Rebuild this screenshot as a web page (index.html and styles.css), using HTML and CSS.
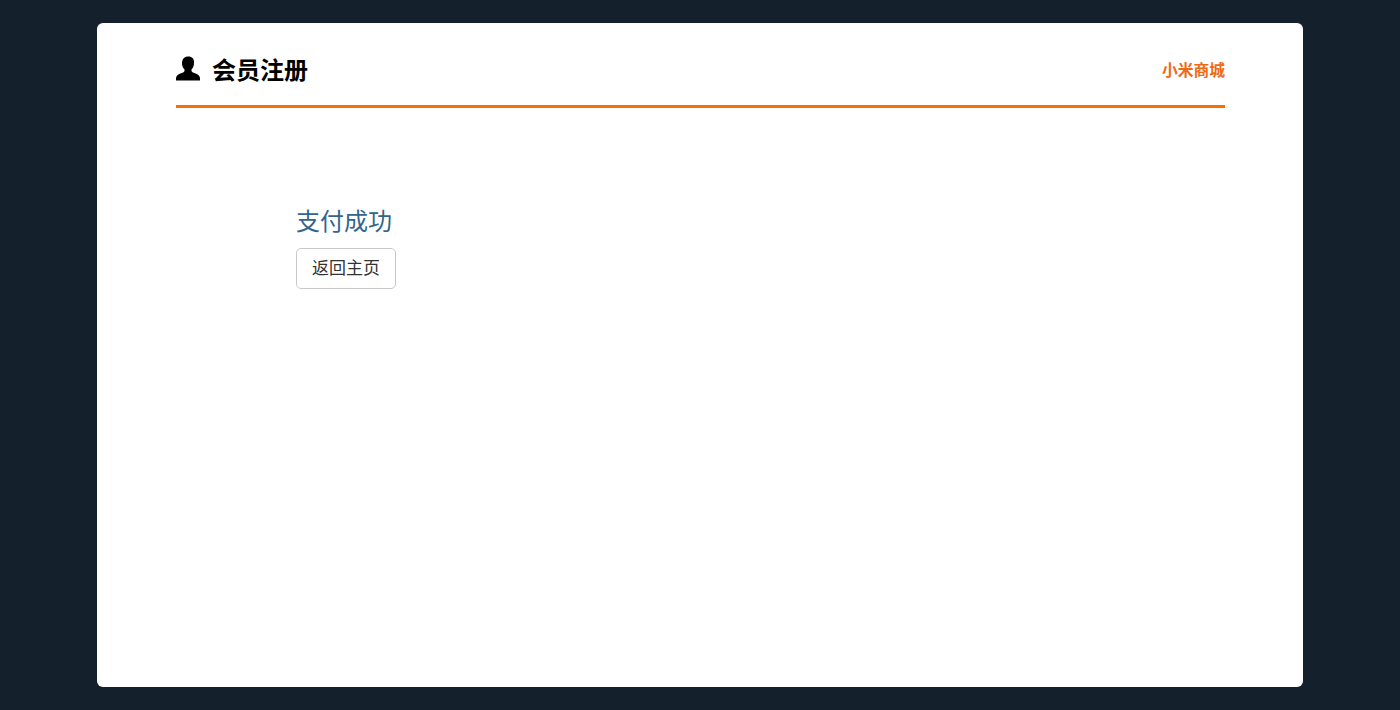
FILE: index.html
```html
<!DOCTYPE html>
<html lang="zh-CN">
<head>
<meta charset="utf-8">
<title>会员注册</title>
<link rel="stylesheet" href="styles.css">
</head>
<body>
<main class="card">
  <header class="head">
    <h1 class="title">
      <svg class="user-icon" viewBox="0 0 24 24" aria-hidden="true"><path d="M12.300 0C8.400 0 6 2.700 6 6.500c0 2.800 1 5 2.500 6.500v1.200c0 1.200-1.500 1.800-3.500 2.600-2.700 1.100-4.500 2.200-5 4.700V24h24v-2.500c-.5-2.500-2.300-3.600-5-4.700-2-.8-3.500-1.400-3.500-2.600V13c1.500-1.500 2.500-3.700 2.500-6.500C18.500 2.700 16.200 0 12.300 0z"/></svg>
      <span>会员注册</span>
    </h1>
    <a class="shop" href="#">小米商城</a>
  </header>
  <section class="body">
    <h2 class="msg">支付成功</h2>
    <a class="btn" href="#">返回主页</a>
  </section>
</main>
</body>
</html>
```
FILE: styles.css
```css
* { box-sizing: border-box; }
html, body { height: 100%; }
body {
  margin: 0;
  background: #14202b;
  font-family: "Liberation Sans", "Noto Sans CJK SC", sans-serif;
  padding: 23px 97px;
}
.card {
  width: 1206px;
  height: 664px;
  background: #fff;
  border-radius: 6px;
  padding: 0 78px 0 79px;
}
.head {
  height: 85px;
  border-bottom: 3px solid #fa6e00;
  display: flex;
  align-items: center;
  justify-content: space-between;
  padding-top: 21px;
  padding-bottom: 8px;
}
.title {
  margin: 0;
  display: flex;
  align-items: center;
  gap: 12px;
  font-size: 24px;
  line-height: 30px;
  font-weight: 700;
  color: #000;
}
.user-icon { width: 24px; height: 25px; display: block; margin-top: -5px; }
.shop {
  font-size: 15.750px;
  font-weight: 700;
  color: #ee6a14;
  text-decoration: none;
  margin-top: -3px;
}
.body { padding: 97px 0 0 120px; }
.msg {
  margin: 0 0 9px;
  font-size: 24px;
  line-height: 34px;
  font-weight: 400;
  color: #31658c;
}
.btn {
  display: inline-block;
  width: 100px;
  height: 41px;
  border: 1px solid #c8c8c8;
  border-radius: 5px;
  font-size: 17px;
  line-height: 39px;
  text-align: center;
  color: #333;
  text-decoration: none;
  background: #fff;
}
```
